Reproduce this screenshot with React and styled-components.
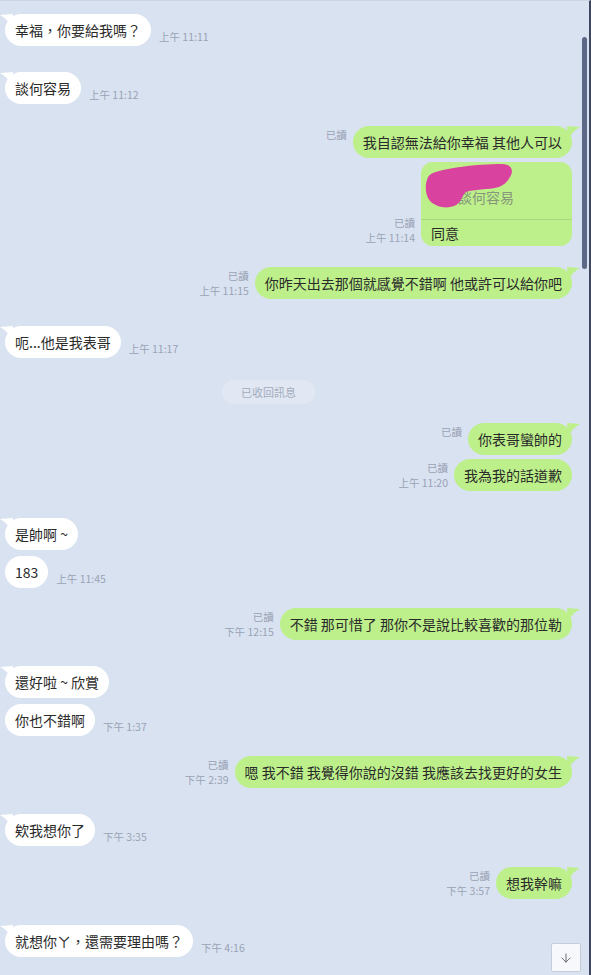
import React from "react";
import styled, { createGlobalStyle } from "styled-components";
import { ArrowDown } from "lucide-react";

const GlobalStyle = createGlobalStyle`
    html, body {
        margin: 0;
        padding: 0;
        background: #d9e2f0;
    }
    * {
        box-sizing: border-box;
    }
`;

const Chat = styled.div`
    position: relative;
    width: 591px;
    height: 975px;
    overflow: hidden;
    background: #d9e2f0;
    border-right: 2px solid #3e475e;
    border-top: 1px solid #ccd4e2;
    padding: 13px 17px 0 5px;
    display: flex;
    flex-direction: column;
    font-family: "Noto Sans CJK TC", "Noto Sans", sans-serif;
`;

const Row = styled.div`
    display: flex;
    flex-direction: ${(p) => (p.$mine ? "row-reverse" : "row")};
    align-items: flex-end;
    gap: ${(p) => (p.$mine ? "6px" : "8px")};
    margin-top: ${(p) => p.$gap || 0}px;
`;

const Bubble = styled.div`
    position: relative;
    background: ${(p) => (p.$mine ? "#bdf08b" : "#ffffff")};
    color: #2a2a2a;
    font-size: 14px;
    line-height: 20px;
    padding: 6px 10px;
    border-radius: 16px;
    white-space: pre;

    &::before {
        content: "";
        display: ${(p) => (p.$tail ? "block" : "none")};
        position: absolute;
        top: 0;
        width: 13px;
        height: 14px;
        background: inherit;
        ${(p) =>
            p.$mine
                ? "right: -8px; clip-path: path('M0 0 L13 1 Q5 5 1 14 Z');"
                : "left: -5px; clip-path: path('M13 0 L0 1 Q8 5 12 14 Z');"}
    }
`;

const ReplyBubble = styled.div`
    position: relative;
    width: 151px;
    background: #bdf08b;
    border-radius: 12px;
    color: #2a2a2a;
    font-size: 14px;
    overflow: hidden;
`;

const Quote = styled.div`
    position: relative;
    height: 58px;
    padding: 25px 10px 0 37px;
    line-height: 20px;
    color: #86967a;
    border-bottom: 1px solid #a9d77f;
`;

const Scribble = styled.svg`
    position: absolute;
    left: 3px;
    top: 1px;
`;

const ReplyText = styled.div`
    padding: 3px 10px;
    line-height: 20px;
`;

const Meta = styled.div`
    display: flex;
    flex-direction: column;
    align-items: ${(p) => (p.$mine ? "flex-end" : "flex-start")};
    margin-bottom: ${(p) => (p.$mine ? "1px" : "2px")};
    font-size: 10.5px;
    line-height: 15px;
    color: #9aa3b6;
    white-space: nowrap;
`;

const MetaLine = styled.span`
    height: 15px;
`;

const Recall = styled.div`
    align-self: center;
    margin-top: ${(p) => p.$gap}px;
    margin-right: 40px;
    height: 24px;
    padding: 0 19px;
    border-radius: 12px;
    background: #e1e8f3;
    color: #a3abbc;
    font-size: 11px;
    line-height: 24px;
`;

const ScrollThumb = styled.div`
    position: absolute;
    right: 2px;
    top: 36px;
    width: 5px;
    height: 232px;
    border-radius: 3px;
    background: #5c6886;
`;

const ScrollButton = styled.button`
    position: absolute;
    right: 8px;
    bottom: 3px;
    width: 30px;
    height: 29px;
    padding: 0;
    display: flex;
    align-items: center;
    justify-content: center;
    background: #f6f8fb;
    border: 1px solid #c6cdd9;
    border-radius: 2px;
    color: #555c66;
`;

const messages = [
    { gap: 0, text: "幸福，你要給我嗎？", tail: true, time: "上午 11:11" },
    { gap: 26, text: "談何容易", tail: true, time: "上午 11:12" },
    { gap: 22, mine: true, text: "我自認無法給你幸福 其他人可以", tail: true, read: true },
    { gap: 4, mine: true, reply: { quote: "談何容易", text: "同意" }, read: true, time: "上午 11:14" },
    { gap: 21, mine: true, text: "你昨天出去那個就感覺不錯啊 他或許可以給你吧", tail: true, read: true, time: "上午 11:15" },
    { gap: 27, text: "呃...他是我表哥", tail: true, time: "上午 11:17" },
    { gap: 22, recall: "已收回訊息" },
    { gap: 19, mine: true, text: "你表哥蠻帥的", tail: true, read: true },
    { gap: 4, mine: true, text: "我為我的話道歉", read: true, time: "上午 11:20" },
    { gap: 27, text: "是帥啊 ~", tail: true },
    { gap: 6, text: "183", time: "上午 11:45" },
    { gap: 20, mine: true, text: "不錯 那可惜了 那你不是說比較喜歡的那位勒", tail: true, read: true, time: "下午 12:15" },
    { gap: 26, text: "還好啦 ~ 欣賞", tail: true },
    { gap: 6, text: "你也不錯啊", time: "下午 1:37" },
    { gap: 20, mine: true, text: "嗯 我不錯 我覺得你說的沒錯 我應該去找更好的女生", tail: true, read: true, time: "下午 2:39" },
    { gap: 26, text: "欸我想你了", tail: true, time: "下午 3:35" },
    { gap: 21, mine: true, text: "想我幹嘛", tail: true, read: true, time: "下午 3:57" },
    { gap: 26, text: "就想你ㄚ，還需要理由嗎？", tail: true, time: "下午 4:16" },
];

const Message = ({ m }) => {
    if (m.recall) {
        return <Recall $gap={m.gap}>{m.recall}</Recall>;
    }
    return (
        <Row $mine={m.mine} $gap={m.gap}>
            {m.reply ? (
                <ReplyBubble>
                    <Quote>
                        <Scribble width="90" height="46" viewBox="0 0 90 46">
                            <path
                                d="M9 10 C22 5 52 1 78 1 C88 1 90 8 86 14 C83 19 80 22 75 24 C64 27 50 26 42 29 C37 33 38 40 30 43 C22 46 12 44 6 38 C1 32 1 22 3 17 C4 13 6 11 9 10 Z"
                                fill="#d9439f"
                            />
                        </Scribble>
                        {m.reply.quote}
                    </Quote>
                    <ReplyText>{m.reply.text}</ReplyText>
                </ReplyBubble>
            ) : (
                <Bubble $mine={m.mine} $tail={m.tail}>
                    {m.text}
                </Bubble>
            )}
            {m.mine ? (
                <Meta $mine>
                    <MetaLine>{m.read ? "已讀" : ""}</MetaLine>
                    <MetaLine>{m.time || ""}</MetaLine>
                </Meta>
            ) : (
                m.time && (
                    <Meta>
                        <MetaLine>{m.time}</MetaLine>
                    </Meta>
                )
            )}
        </Row>
    );
};

export default function App() {
    return (
        <>
            <GlobalStyle />
            <Chat>
                {messages.map((m, i) => (
                    <Message key={i} m={m} />
                ))}
                <ScrollThumb />
                <ScrollButton aria-label="scroll to bottom">
                    <ArrowDown size={14} strokeWidth={1.5} />
                </ScrollButton>
            </Chat>
        </>
    );
}
